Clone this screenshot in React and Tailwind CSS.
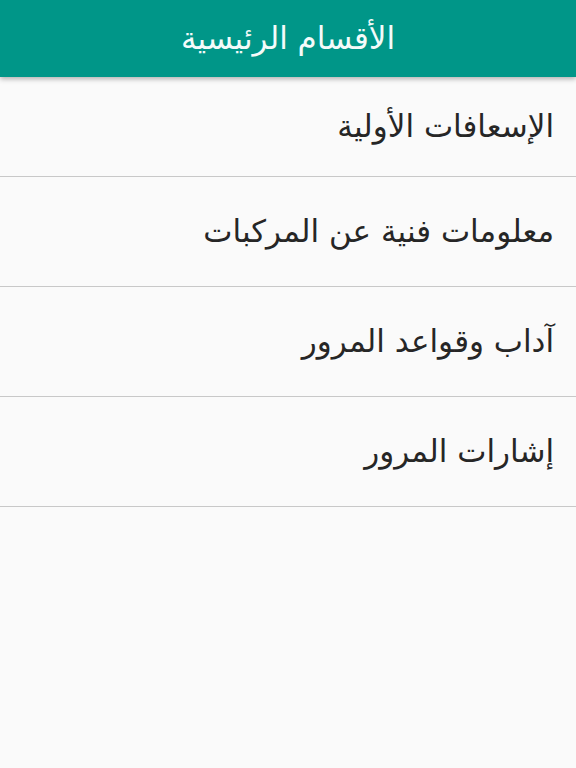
import React from 'react';

const sections = [
  'الإسعافات الأولية',
  'معلومات فنية عن المركبات',
  'آداب وقواعد المرور',
  'إشارات المرور',
];

const App = () => {
  return (
    <div
      dir="rtl"
      className="min-h-[768px] w-full bg-[#fafafa]"
      style={{ fontFamily: '"DejaVu Sans", "Noto Sans", sans-serif' }}
    >
      <header className="h-[77px] bg-[#009688] flex items-center justify-center shadow-[0_2px_5px_rgba(0,0,0,0.3)] relative z-10">
        <h1 className="text-[#f4fbfa] text-[31px] font-normal">الأقسام الرئيسية</h1>
      </header>
      <ul>
        {sections.map((title, i) => (
          <li
            key={title}
            className={`flex items-center pr-[22px] border-b border-[#c8c8c8] text-[#262626] text-[31px] ${
              i === 0 ? 'h-[100px]' : 'h-[110px]'
            }`}
          >
            {title}
          </li>
        ))}
      </ul>
    </div>
  );
};

export default App;
